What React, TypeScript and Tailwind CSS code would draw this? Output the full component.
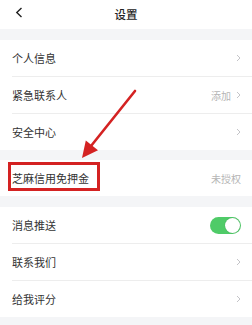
import React from "react";

const Chevron = () => (
  <svg width="5" height="8" viewBox="0 0 5 8" className="ml-[5px]">
    <path d="M1 1 L4 4 L1 7" fill="none" stroke="#c4c4c8" strokeWidth="1" />
  </svg>
);

const Row = ({
  label,
  right,
  chevron = true,
  divider = false,
  children,
}: {
  label: string;
  right?: string;
  chevron?: boolean;
  divider?: boolean;
  children?: React.ReactNode;
}) => (
  <div className="relative bg-white">
    <div className="flex h-[36px] items-center pl-[12px] pr-[11px]">
      <span className="flex-1 text-[11px] text-[#333333]">{label}</span>
      {right && <span className="text-[10px] text-[#b5b5b5]">{right}</span>}
      {chevron && <Chevron />}
      {children}
    </div>
    {divider && <div className="ml-[12px] h-px bg-[#ededed]" />}
  </div>
);

export default function App() {
  return (
    <div
      className="relative h-[325px] w-[252px] overflow-hidden bg-[#f4f5f7]"
      style={{ fontFamily: '"Noto Sans CJK SC", "Noto Sans", sans-serif' }}
    >
      <div className="relative flex h-[29px] items-center justify-center bg-white">
        <svg width="8" height="11" viewBox="0 0 8 11" className="absolute left-[15px] top-[7px]">
          <path d="M6.5 1 L1.8 5.5 L6.5 10" fill="none" stroke="#222" strokeWidth="1.4" />
        </svg>
        <span className="text-[11.5px] font-medium text-[#222]">设置</span>
      </div>
      <div className="h-[11px]" />
      <Row label="个人信息" divider />
      <Row label="紧急联系人" right="添加" divider />
      <Row label="安全中心" />
      <div className="h-[10px]" />
      <div className="relative">
        <Row label="芝麻信用免押金" right="未授权" chevron={false} />
        <div className="absolute left-[8px] top-[2px] h-[29px] w-[92px] border-[3px] border-[#d42222]" />
      </div>
      <div className="h-[11px]" />
      <Row label="消息推送" chevron={false} divider>
        <div className="relative flex h-[17px] w-[31px] items-center rounded-full bg-[#4fcb68]">
          <div className="absolute right-[1px] top-[1px] h-[15px] w-[15px] rounded-full bg-white shadow-[0_0_1px_rgba(0,0,0,0.3)]" />
        </div>
      </Row>
      <Row label="联系我们" divider />
      <Row label="给我评分" />
      <svg
        width="252"
        height="325"
        viewBox="0 0 252 325"
        className="pointer-events-none absolute left-0 top-0"
      >
        <line x1="135" y1="91" x2="91" y2="146" stroke="#d42222" strokeWidth="2.6" strokeLinecap="round" />
        <polygon points="82,158 85.8,140.6 98,150.2" fill="#d42222" />
      </svg>
    </div>
  );
}
